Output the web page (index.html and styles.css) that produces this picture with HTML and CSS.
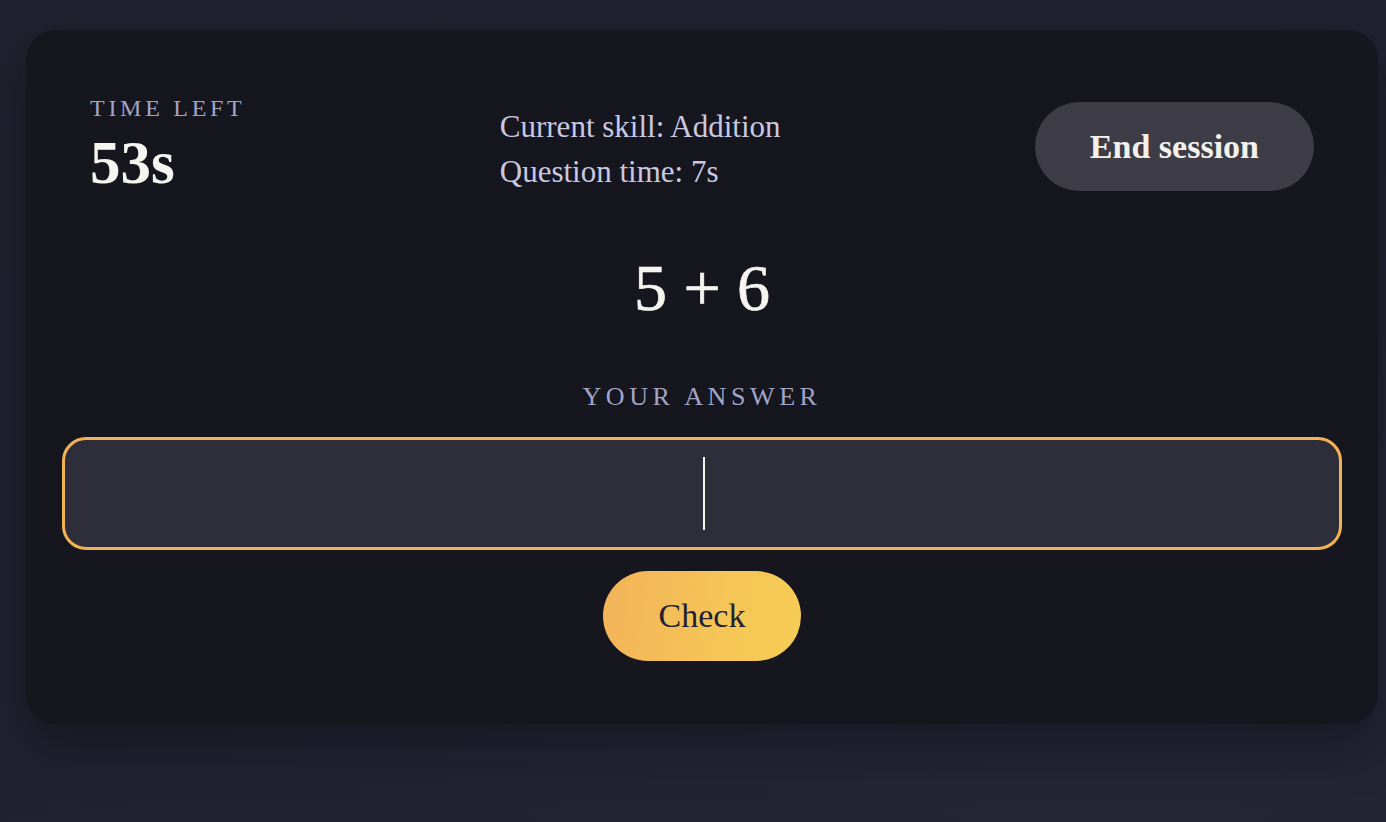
FILE: index.html
```html
<!DOCTYPE html>
<html lang="en">
<head>
<meta charset="utf-8">
<title>Practice session</title>
<link rel="stylesheet" href="styles.css">
</head>
<body>
<main class="card">
  <header class="session-head">
    <div class="timer">
      <div class="timer-label">Time left</div>
      <div class="timer-value">53s</div>
    </div>
    <div class="meta">
      <div class="meta-line">Current skill: Addition</div>
      <div class="meta-line">Question time: 7s</div>
    </div>
    <button class="btn-end" type="button">End session</button>
  </header>
  <div class="problem">5 + 6</div>
  <form class="answer-form" onsubmit="return false">
    <label class="answer-label" for="answer">Your answer</label>
    <div class="answer-field">
      <input id="answer" class="answer-input" type="text" inputmode="numeric" autocomplete="off">
      <span class="caret"></span>
    </div>
    <button class="btn-check" type="submit">Check</button>
  </form>
</main>
</body>
</html>
```
FILE: styles.css
```css
* { box-sizing: border-box; }
html, body { margin: 0; padding: 0; }
body {
  min-height: 822px;
  background: radial-gradient(ellipse at 80% 100%, #262536 0%, #222130 60%, #21202e 100%);
  font-family: "Liberation Serif", "Times New Roman", serif;
  padding: 30px 8px 0 26px;
}
.card {
  background: #16161f;
  border-radius: 30px;
  padding: 63.5px 36px 63px;
  box-shadow: 0 24px 48px rgba(8, 8, 14, 0.35);
  display: flex;
  flex-direction: column;
  align-items: center;
}
.session-head {
  width: 100%;
  padding: 0 28px;
  display: flex;
  justify-content: space-between;
  align-items: center;
}
.timer {
  display: flex;
  flex-direction: column;
  margin-bottom: 1px;
}
.timer-label {
  font-size: 24px;
  line-height: 28px;
  letter-spacing: 0.155em;
  text-transform: uppercase;
  color: #a3a4c4;
}
.timer-value {
  margin-top: 5px;
  font-size: 61px;
  line-height: 72px;
  font-weight: 700;
  color: #f6f4ef;
}
.meta {
  color: #c9c9e1;
  font-size: 31px;
  padding-top: 4px;
}
.meta-line { line-height: 45px; }
.btn-end {
  font-family: inherit;
  font-size: 34px;
  font-weight: 700;
  line-height: 41px;
  color: #f4f1ea;
  background: #3d3c47;
  border: none;
  border-radius: 999px;
  padding: 24px 55px;
  cursor: pointer;
}
.problem {
  margin-top: 48px;
  font-size: 66px;
  line-height: 79px;
  color: #f6f4ef;
  -webkit-text-stroke: 0.7px #f6f4ef;
}
.answer-form {
  width: 100%;
  margin-top: 55.5px;
  display: flex;
  flex-direction: column;
  align-items: center;
}
.answer-label {
  font-size: 26px;
  line-height: 29px;
  letter-spacing: 0.177em;
  text-transform: uppercase;
  color: #a2a5c6;
}
.answer-field {
  position: relative;
  width: 100%;
  margin-top: 26px;
}
.answer-input {
  display: block;
  width: 100%;
  height: 113px;
  border: 3px solid #f4b255;
  border-radius: 24px;
  background: #2e2d3a;
  color: #f6f4ef;
  font-family: inherit;
  font-size: 56px;
  text-align: center;
  caret-color: transparent;
  outline: none;
}
.caret {
  position: absolute;
  left: calc(50% + 1px);
  top: 20px;
  width: 2px;
  height: 73px;
  background: #f6f4ef;
}
.btn-check {
  margin-top: 21px;
  font-family: inherit;
  font-size: 34px;
  line-height: 42px;
  color: #211f33;
  background: linear-gradient(100deg, #f2b35a 0%, #f5c556 60%, #f6cd55 100%);
  border: none;
  border-radius: 999px;
  padding: 24px 56px;
  cursor: pointer;
}
```
